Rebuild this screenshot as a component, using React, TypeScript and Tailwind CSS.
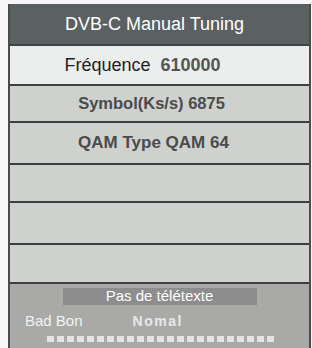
const font = { fontFamily: '"Liberation Sans", Arial, sans-serif' };

function Row({ children, h, light }: { children?: React.ReactNode; h: string; light?: boolean }) {
  return (
    <div
      className={`flex items-center justify-center border-b-2 border-[#3d3f3e] ${h} ${
        light ? 'bg-[#eceeed]' : 'bg-[#cfd1ce]'
      }`}
    >
      {children}
    </div>
  );
}

export default function App() {
  const squares = Array.from({ length: 23 });
  return (
    <div className="h-[348px] w-[312px] bg-[#f6f6f6] pl-[8px] pr-[1px] pt-[4px]" style={font}>
      <div className="flex h-[344px] flex-col border-x-2 border-[#4a4c4b]">
        <div className="flex h-[42px] items-center justify-center border-b-2 border-[#3f4443] bg-[#5b6163] pr-[10px] text-[18px] text-white">
          DVB-C Manual Tuning
        </div>
        <Row h="h-[40px]" light>
          <span className="pr-[34px] text-[18px] text-[#1e1e1e]">
            Fréquence&nbsp;&nbsp;<span className="font-bold text-[#555]">610000</span>
          </span>
        </Row>
        <Row h="h-[37px]">
          <span className="pr-[16px] text-[16.5px] font-bold text-[#4a4b4a]">Symbol(Ks/s) 6875</span>
        </Row>
        <Row h="h-[42px]">
          <span className="pr-[12px] text-[17px] font-bold text-[#4a4b4a]">QAM Type QAM 64</span>
        </Row>
        <Row h="h-[38px]" />
        <Row h="h-[42px]" />
        <Row h="h-[39px]" />
        <div className="flex flex-1 flex-col bg-[#a9aaa8] pt-[4px]">
          <div className="mx-auto flex h-[17px] w-[194px] items-center justify-center bg-[#8c8d8c] text-[15px] text-white">
            Pas de télétexte
          </div>
          <div className="mt-[8px] flex h-[16px] items-center text-[15px] text-[#f2f2f2]">
            <span className="pl-[15px]">Bad Bon</span>
            <span className="pl-[50px] text-[14px] font-bold tracking-[1.5px] text-[#e8e8e8]">Nomal</span>
          </div>
          <div className="mt-[7px] flex gap-[3px] pl-[37px]">
            {squares.map((_, i) => (
              <div key={i} className="h-[6px] w-[7px] bg-[#e4e4e4]" />
            ))}
          </div>
        </div>
      </div>
    </div>
  );
}
